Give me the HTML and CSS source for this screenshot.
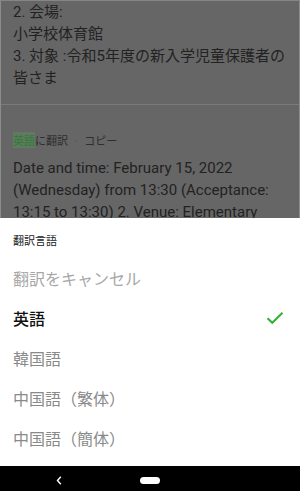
FILE: index.html
```html
<!DOCTYPE html>
<html lang="ja">
<head>
<meta charset="utf-8">
<link rel="stylesheet" href="styles.css">
</head>
<body>
<div class="screen">
  <section class="chat">
    <div class="orig">
      <p>2. 会場:</p>
      <p>小学校体育館</p>
      <p>3. 対象 :令和5年度の新入学児童保護者の</p>
      <p>皆さま</p>
    </div>
    <hr class="divider">
    <div class="actions"><span class="lang">英語</span>に翻訳<span class="dot">·</span>コピー</div>
    <p class="trans">Date and time: February 15, 2022 (Wednesday) from 13:30 (Acceptance: 13:15 to 13:30) 2. Venue: Elementary</p>
  </section>
  <section class="sheet">
    <div class="sheet-title">翻訳言語</div>
    <ul class="options">
      <li class="opt cancel">翻訳をキャンセル</li>
      <li class="opt selected">英語
        <svg class="check" width="18" height="14" viewBox="0 0 18 14"><path d="M1.5 7.2 L6.3 11.8 L16.5 1.8" fill="none" stroke="#35b035" stroke-width="2"/></svg>
      </li>
      <li class="opt">韓国語</li>
      <li class="opt">中国語（繁体）</li>
      <li class="opt">中国語（簡体）</li>
    </ul>
  </section>
  <nav class="navbar">
    <svg class="back" width="6" height="9" viewBox="0 0 6 9"><path d="M4.8 0.8 L1.5 4.5 L4.8 8.2" fill="none" stroke="#fff" stroke-width="1.4"/></svg>
    <span class="home"></span>
  </nav>
</div>
</body>
</html>
```
FILE: styles.css
```css
* { box-sizing: border-box; }
html, body { margin: 0; padding: 0; }
body {
  width: 300px;
  height: 491px;
  overflow: hidden;
  font-family: Roboto, "Noto Sans CJK JP", sans-serif;
}
.screen {
  display: flex;
  flex-direction: column;
  height: 491px;
}
.chat {
  height: 218px;
  overflow: hidden;
  background: #666666;
  border-left: 1px solid #8c8c8c;
  border-right: 1px solid #8c8c8c;
  border-top: 1px solid #858585;
  color: #222;
  padding: 0 12px 0 12px;
}
.orig p {
  margin: 0;
  font-size: 15px;
  line-height: 22px;
}
.divider {
  border: 0;
  border-top: 1px solid #7a7a7a;
  margin: 15px -12px 0 -12px;
}
.actions {
  margin-top: 27px;
  font-size: 11px;
  line-height: 16px;
  color: #2e2e2e;
  font-family: "Noto Sans CJK JP", sans-serif;
}
.actions .lang { color: #2f7a37; background: #5f7a5f; }
.actions .dot { margin: 0 5px; color: #555; }
.trans {
  margin: 9px 0 0 0;
  font-size: 15px;
  line-height: 22px;
  width: 276px;
}
.sheet {
  flex: 1;
  background: #fff;
  padding: 0 13px;
}
.sheet-title {
  height: 40px;
  padding-top: 14px;
  font-size: 11px;
  line-height: 16px;
  color: #222;
  font-family: "Noto Sans CJK JP", sans-serif;
}
.options {
  list-style: none;
  margin: 0;
  padding: 0;
}
.opt {
  height: 40px;
  display: flex;
  align-items: center;
  justify-content: space-between;
  font-size: 16px;
  color: #8a8a8a;
  font-family: "Noto Sans CJK JP", sans-serif;
}
.opt.cancel { color: #a8a8a8; }
.opt.selected { color: #111; font-weight: 500; }
.check { margin-right: 3px; }
.navbar {
  height: 25px;
  background: #000;
  display: flex;
  align-items: center;
}
.back { margin-left: 56px; margin-top: 3px; }
.home {
  margin-left: 78px;
  margin-top: 3px;
  width: 20px;
  height: 7px;
  border-radius: 4px;
  background: #fff;
}
```
